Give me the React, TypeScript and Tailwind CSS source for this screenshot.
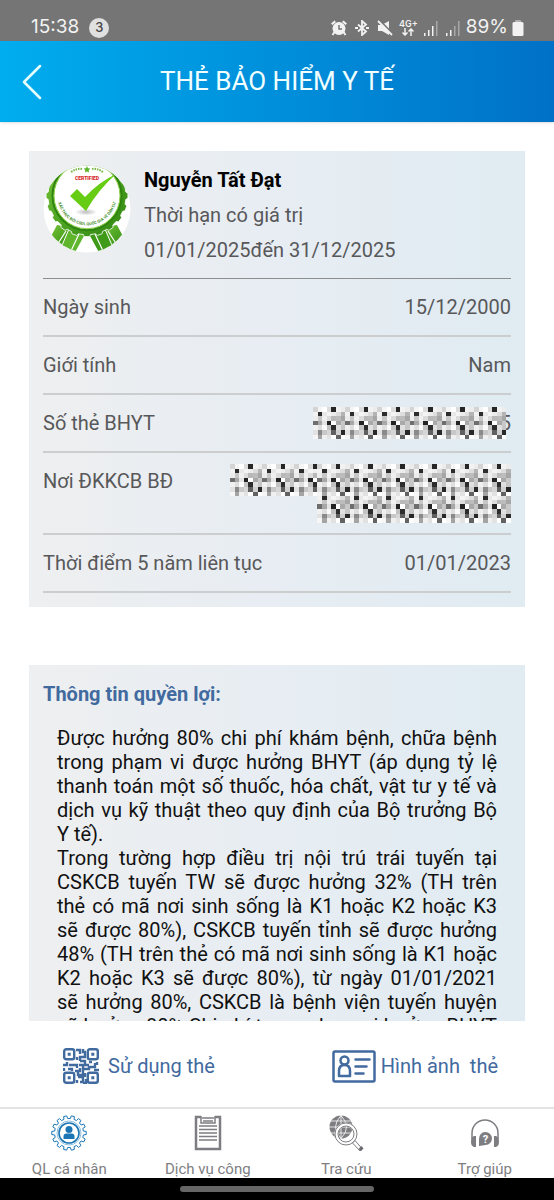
import type { ReactNode } from "react";

const MOSAIC = [
  ["#d4d4d4", "#f4f4f4", "#ffffff", "#dcdcdc", "#262626", "#f2f2f2", "#ececec"],
  ["#f2f2f2", "#2c2c2c", "#e8e8e8", "#f4f4f4", "#ececec", "#dddddd", "#b4b4b4"],
  ["#ececec", "#c6c6c6", "#f0f0f0", "#dcdcdc", "#b8b8b8", "#bcbcbc", "#a6a6a6"],
  ["#6e6e6e", "#a8a8a8", "#e4e4e4", "#222222", "#ffffff", "#a9a9a9", "#c8c8c8"],
  ["#f0f0f0", "#dedede", "#fafafa", "#c2c2c2", "#2c2c2c", "#e0e0e0", "#c6c6c6"],
  ["#e2e2e2", "#8a8a8a", "#c8c8c8", "#d6d6d6", "#606060", "#d0d0d0", "#282828"],
  ["#f6f6f6", "#a4a4a4", "#f0f0f0", "#e2e2e2", "#ffffff", "#626262", "#ffffff"],
];

const CELL = 4.6;

function MosaicBlock({ x = 0, y = 0, cols }: { x?: number; y?: number; cols: number }) {
  return (
    <g transform={`translate(${x} ${y})`} shapeRendering="crispEdges">
      {MOSAIC.map((row, r) =>
        Array.from({ length: cols }, (_, c) => (
          <rect key={`${r}-${c}`} x={c * CELL} y={r * CELL} width={CELL} height={CELL} fill={row[c % 7]} />
        ))
      )}
    </g>
  );
}

function gearPath(cx: number, cy: number, inner: number, outer: number, teeth: number) {
  const pts: string[] = [];
  const step = (Math.PI * 2) / teeth;
  for (let i = 0; i < teeth; i++) {
    const a = i * step;
    [
      [inner, -0.3],
      [outer, -0.2],
      [outer, 0.2],
      [inner, 0.3],
    ].forEach(([r, k]) => {
      pts.push(`${(cx + r * Math.cos(a + k * step)).toFixed(2)} ${(cy + r * Math.sin(a + k * step)).toFixed(2)}`);
    });
  }
  return `M${pts.join("L")}Z`;
}

function CertifiedBadge() {
  return (
    <svg viewBox="0 0 88 88" className="mt-0.5 size-[88px] shrink-0" role="img" aria-label="Certified">
      <defs>
        <clipPath id="badge-clip">
          <circle cx="44" cy="44" r="43.5" />
        </clipPath>
        <linearGradient id="badge-green" x1="0" y1="0" x2="1" y2="1">
          <stop offset="0" stopColor="#7cc63a" />
          <stop offset="0.5" stopColor="#4ea522" />
          <stop offset="1" stopColor="#2f8412" />
        </linearGradient>
        <radialGradient id="badge-shadow">
          <stop offset="0" stopColor="#bdbdbd" />
          <stop offset="1" stopColor="#ffffff" />
        </radialGradient>
        <path id="badge-arc" d="M14.5 30.7A29.5 29.5 0 0 0 73.5 30.7" />
      </defs>
      <g clipPath="url(#badge-clip)">
        <rect width="88" height="88" fill="#fff" />
        <path d="M14 60L5 77L14 76L20 86L32 63Z" fill="url(#badge-green)" />
        <path d="M26 64L17 85L30 92L42 70Z" fill="#5fb52b" stroke="#fff" />
        <path d="M74 60L83 77L74 76L68 86L56 63Z" fill="url(#badge-green)" />
        <path d="M62 64L71 85L58 92L46 70Z" fill="#3f9a1a" stroke="#fff" />
        <path d="M36 69L27 88M52 69L61 88M23 66L14 80M65 66L74 80" stroke="#fff" strokeWidth="1.2" />
        <path
          d={gearPath(44, 30.7, 39, 41, 20)}
          fill="url(#badge-green)"
          stroke="#fff"
          strokeWidth="0.8"
          strokeLinejoin="round"
        />
        <circle cx="44" cy="30.7" r="34.5" fill="none" stroke="#2f8510" strokeWidth="2" />
        <circle cx="44" cy="30.7" r="33" fill="#fff" stroke="#8fd14d" strokeWidth="1" />
        <ellipse cx="43" cy="47" rx="11" ry="3.5" fill="url(#badge-shadow)" />
        <path d="M27 31L34 24L42 32Q56 17 73 9Q55 25 43 46Z" fill="#66cc14" />
        <path d="m44 1 1 2.2 2.4.3-1.7 1.7.4 2.3-2.1-1.1-2.1 1.1.4-2.3-1.7-1.7 2.4-.3Z" fill="#5db52c" />
        <path d="M28 7q6-4 11-3M60 7q-6-4-11-3" fill="none" stroke="#79b84a" strokeWidth="2" strokeDasharray="1.6 .9" />
        <text x="44" y="15" textAnchor="middle" className="fill-[#d5201c] font-[Roboto] text-[5px] font-black">
          CERTIFIED
        </text>
        <text className="fill-[#3c8c25] font-[Roboto] text-[4px] font-bold">
          <textPath href="#badge-arc" startOffset="50%" textAnchor="middle">
            XÁC THỰC BỞI CSDL QUỐC GIA VỀ DÂN CƯ
          </textPath>
        </text>
      </g>
    </svg>
  );
}

function StatusBar() {
  return (
    <div className="flex h-[41px] shrink-0 items-center justify-between bg-[#757575] pt-3.5 pr-[30px] pl-[31px] font-[Inter,sans-serif] text-[19px] text-[#f2f2f2]">
      <div className="flex items-center gap-2.5">
        <span>15:38</span>
        <span className="flex size-5 items-center justify-center rounded-full bg-[#e0e0e0] text-[13px] font-medium text-[#444]">
          3
        </span>
      </div>
      <div className="flex items-center">
        <svg viewBox="0 0 16 16" className="mr-2 size-4" aria-hidden="true">
          <path d="M0 3.5 3.5.5 5 2 1.5 5ZM16 3.5 12.5.5 11 2l3.5 3Z" fill="#f2f2f2" />
          <circle cx="8" cy="8.5" r="6.5" fill="#f2f2f2" />
          <path d="m3.5 12-2 3M12.5 12l2 3" stroke="#f2f2f2" strokeWidth="2" />
          <path d="M8 5v4h3" fill="none" stroke="#757575" strokeWidth="1.5" />
        </svg>
        <svg viewBox="0 0 14 16" className="mr-2 h-4 w-3.5" fill="none" stroke="#f2f2f2" strokeWidth="1.8" aria-hidden="true">
          <path d="m3 4.500 8 7L7 15V1l4 3.500-8 7" />
          <path d="M0 8h3M11 8h3" strokeWidth="2" />
        </svg>
        <svg viewBox="0 0 16 16" className="mr-1.5 size-4" aria-hidden="true">
          <path d="M1 5h3.5L12 1v14L5 11H1Z" fill="#f2f2f2" />
          <path d="m2 0 14 14" stroke="#757575" strokeWidth="2" />
          <path d="m1 1 14 14" stroke="#f2f2f2" strokeWidth="1.8" />
        </svg>
        <div className="mr-1.5 flex flex-col items-center">
          <span className="text-[9px] leading-[9px] font-semibold">4G+</span>
          <svg viewBox="0 0 12 8" className="h-2 w-3" fill="none" stroke="#f2f2f2" strokeWidth="1.5" aria-hidden="true">
            <path d="M3 0v7M.5 4.500 3 7l2.500-2.500M9 8V1M6.500 3.500 9 1l2.500 2.500" />
          </svg>
        </div>
        <svg viewBox="0 0 36 16" className="mr-1.5 h-4 w-9" aria-hidden="true">
          <path d="M0 13h1.500v3H0ZM4 10h1.500v6H4ZM8 6h1.500v10H8ZM22 13h1.500v3H22ZM26 10h1.500v6H26Z" fill="#f2f2f2" />
          <path d="M12 1h1.500v15H12ZM30 6h1.500v10H30ZM34 1h1.500v15H34Z" fill="#a8a8a8" />
        </svg>
        <span className="mr-1">89%</span>
        <svg viewBox="0 0 12 16" className="h-4 w-3" aria-hidden="true">
          <rect x="3" y="0" width="6" height="4" rx="1" fill="#b0b0b0" />
          <rect x="0.5" y="2" width="11" height="14" rx="1.5" fill="#f2f2f2" />
        </svg>
      </div>
    </div>
  );
}

function Row({ label, children }: { label: string; children: ReactNode }) {
  return (
    <div className="flex justify-between border-b-2 border-[#cbcdcf] py-[15px] leading-[26px]">
      <dt>{label}</dt>
      <dd className="flex justify-end">{children}</dd>
    </div>
  );
}

function QrIcon() {
  return (
    <svg viewBox="0 0 36 36" className="size-9" fill="none" stroke="#416a9f" strokeWidth="2.4" aria-hidden="true">
      <rect x="1.2" y="1.2" width="10" height="10" rx="2" />
      <rect x="24.8" y="1.2" width="10" height="10" rx="2" />
      <rect x="1.2" y="24.800" width="10" height="10" rx="2" />
      <rect x="24.8" y="24.8" width="10" height="10" rx="2" />
      <path d="M4.700 6.200h3M28.300 6.200h3M4.700 29.800h3M28.300 29.800h3" strokeWidth="3" />
      <path d="M13 2h4v4M20 1v3h3M22 4v5h-5v4M14 9v3M17 13h5v4h4M0 17h4v-3M6 17h8v3M16 17h4v4h6v-2h6v-4M34 14v3M29 14h-3M1 20v3M5 21h4v2M12 23h5v-3M31 22h5M20 22v5h-5v-3M15 29h5v5h-3M22 25v4M14 32v3M20 35h3v-4" />
    </svg>
  );
}

function CardIcon() {
  return (
    <svg viewBox="0 0 44 33" className="h-[33px] w-11" fill="none" stroke="#416a9f" aria-hidden="true">
      <rect x="1.5" y="1.5" width="41" height="30" rx="1.5" strokeWidth="2.5" />
      <circle cx="12.5" cy="10.5" r="4" strokeWidth="2.5" />
      <path d="M7 26v-5q0-6 5.500-6t5.500 6v5Z" strokeWidth="2.5" strokeLinejoin="round" />
      <path d="M23.500 9.500h14M23.500 16.500h11M23.500 23.500h8" strokeWidth="2.5" strokeLinecap="round" />
    </svg>
  );
}

function PersonGearIcon() {
  return (
    <svg viewBox="0 0 36 36" className="size-9" fill="none" stroke="#1b75b5" aria-hidden="true">
      <path d={gearPath(18, 18, 14.5, 17.3, 14)} strokeWidth="1" strokeLinejoin="round" />
      <circle cx="18" cy="18" r="12" stroke="#8fc0e0" strokeWidth="1" />
      <circle cx="18" cy="18" r="10" strokeWidth="1.6" />
      <circle cx="18" cy="14.5" r="3.5" fill="#1b75b5" stroke="none" />
      <path d="M12.500 24v-2.500q0-3 3-3h5q3 0 3 3V24Z" fill="#1b75b5" stroke="none" />
    </svg>
  );
}

function ClipboardIcon() {
  return (
    <svg viewBox="0 0 36 36" className="size-9" fill="none" stroke="#7e7e82" aria-hidden="true">
      <path d="M11 2H6v32h24V2h-5" strokeWidth="2.5" />
      <path d="M11 1v7h14V1M12 3h12M13 6h10" strokeWidth="1.5" />
      <path d="M9 11h18M9 14.500h18M9 18h18M9 21.500h18M9 25h18" strokeWidth="1.5" />
    </svg>
  );
}

function GlobeSearchIcon() {
  return (
    <svg viewBox="0 0 36 36" className="size-9" fill="none" aria-hidden="true">
      <circle cx="13" cy="12" r="11.5" fill="#7e7e82" />
      <path
        d="M13 0v24M1 12h24M3 6h20M3 18h20M13 .5Q2 12 13 23.500M13 .5Q24 12 13 23.500"
        stroke="#fff"
        strokeWidth="0.8"
      />
      <circle cx="18" cy="19" r="9.5" stroke="#fff" strokeWidth="4" />
      <circle cx="18" cy="19" r="11" stroke="#7e7e82" strokeWidth="1" />
      <circle cx="18" cy="19" r="8" stroke="#7e7e82" strokeWidth="1" />
      <path d="m24.500 28 2.500-2.500 7 8-2 2.500Z" fill="#fff" stroke="#7e7e82" />
      <path d="m30.500 34 3-3 2 2.500-2.500 2.500Z" fill="#6b6b6f" />
    </svg>
  );
}

function HeadsetIcon() {
  return (
    <svg viewBox="0 0 36 36" className="size-9" fill="none" aria-hidden="true">
      <path d="M5 24v-6a13 13 0 0 1 26 0v6" stroke="#7e7e82" strokeWidth="1.5" />
      <path d="M9 21v11H7q-3-1-3-5.500T7 21ZM27 21v11h2q3-1 3-5.500T29 21Z" fill="#7e7e82" />
      <path d="M12 31V24a6.500 6.500 0 1 1 6.500 6Z" fill="#7e7e82" />
      <text x="18.5" y="28" textAnchor="middle" className="fill-white font-[Roboto] text-[11px] font-bold">
        ?
      </text>
    </svg>
  );
}

const tabs = [
  { label: "QL cá nhân", icon: <PersonGearIcon /> },
  { label: "Dịch vụ công", icon: <ClipboardIcon /> },
  { label: "Tra cứu", icon: <GlobeSearchIcon /> },
  { label: "Trợ giúp", icon: <HeadsetIcon /> },
];

export default function App() {
  return (
    <div className="flex h-screen flex-col bg-white font-[Roboto,sans-serif] text-xl text-[#58585a]">
      <StatusBar />
      <header className="grid h-[81px] shrink-0 grid-cols-[64px_1fr_64px] items-center bg-linear-to-r from-[#00adee] to-[#0071c7] shadow-sm">
        <button type="button" aria-label="Quay lại" className="flex h-full items-center pl-[22px]">
          <svg viewBox="0 0 20 36" className="h-9 w-5" fill="none" stroke="#e4ffff" strokeWidth="2.5" aria-hidden="true">
            <path d="M18 2 2 18l16 16" strokeLinecap="round" strokeLinejoin="round" />
          </svg>
        </button>
        <h1 className="text-center text-[26px] text-[#f0ffff]">THẺ BẢO HIỂM Y TẾ</h1>
      </header>

      <main className="flex min-h-0 flex-1 flex-col px-[29px] pt-[29px]">
        <section className="shrink-0 bg-linear-to-r from-[#eeeff0] via-[#e7edf3] to-[#e0ebf2] px-3.5 pb-3.5">
          <div className="flex gap-[13px] border-b border-[#8c8e90] pt-3 pb-2.5">
            <CertifiedBadge />
            <div className="leading-[35px]">
              <h2 className="font-bold text-black">Nguyễn Tất Đạt</h2>
              <p>Thời hạn có giá trị</p>
              <p>01/01/2025đến 31/12/2025</p>
            </div>
          </div>
          <dl>
            <Row label="Ngày sinh">15/12/2000</Row>
            <Row label="Giới tính">Nam</Row>
            <Row label="Số thẻ BHYT">
              <svg viewBox="0 0 193 32" className="relative -my-[3px] -mr-1.5 h-8 w-[193px]" aria-hidden="true">
                <MosaicBlock cols={42} />
              </svg>
              5
            </Row>
            <Row label="Nơi ĐKKCB BĐ">
              <svg viewBox="0 0 281 59" className="-mt-1 -mb-[5px] h-[59px] w-[281px]" aria-hidden="true">
                <MosaicBlock x={87.4} y={26.6} cols={42} />
                <MosaicBlock cols={19} />
                <MosaicBlock x={87.4} cols={42} />
              </svg>
            </Row>
            <Row label="Thời điểm 5 năm liên tục">01/01/2023</Row>
          </dl>
        </section>

        <section className="mt-[58px] min-h-0 flex-1 overflow-hidden bg-linear-to-r from-[#eeeff0] via-[#e7edf3] to-[#e0ebf2] px-3.5 pt-3.5">
          <h2 className="leading-[30px] font-bold text-[#416a9f]">Thông tin quyền lợi:</h2>
          <div className="mt-[17px] px-3.5 text-justify leading-6 text-[#111]">
            <p>
              Được hưởng 80% chi phí khám bệnh, chữa bệnh trong phạm vi được hưởng BHYT (áp dụng tỷ lệ thanh toán một số
              thuốc, hóa chất, vật tư y tế và dịch vụ kỹ thuật theo quy định của Bộ trưởng Bộ Y tế).
            </p>
            <p className="[text-align-last:justify]">
              Trong tường hợp điều trị nội trú trái tuyến tại CSKCB tuyến TW sẽ được hưởng 32% (TH trên thẻ có mã nơi
              sinh sống là K1 hoặc K2 hoặc K3 sẽ được 80%), CSKCB tuyến tỉnh sẽ được hưởng 48% (TH trên thẻ có mã nơi
              sinh sống là K1 hoặc K2 hoặc K3 sẽ được 80%), từ ngày 01/01/2021 sẽ&nbsp;hưởng 80%, CSKCB là bệnh viện
              tuyến huyện sẽ&nbsp;hưởng 80%.Chi phí trong phạm vi hưởng BHYT
            </p>
          </div>
        </section>
      </main>

      <div className="flex h-[86px] shrink-0 items-center justify-between pt-1 pr-14 pl-[63px] text-[#416a9f]">
        <button type="button" className="flex items-center gap-[9px]">
          <QrIcon />
          Sử dụng thẻ
        </button>
        <button type="button" className="flex items-center gap-[5px]">
          <CardIcon />
          <span>Hình ảnh&nbsp; thẻ</span>
        </button>
      </div>

      <nav className="grid h-[71px] shrink-0 grid-cols-4 border-t-2 border-[#e3e3e3] text-[15px] leading-5 text-[#7e7e82]">
        {tabs.map((tab) => (
          <a key={tab.label} href="#" className="flex flex-col items-center gap-2 pt-1.5">
            {tab.icon}
            <span>{tab.label}</span>
          </a>
        ))}
      </nav>
      <div className="flex h-[22px] shrink-0 justify-center bg-black pt-2">
        <div className="h-1.5 w-[35%] rounded-full bg-[#666]" />
      </div>
    </div>
  );
}
